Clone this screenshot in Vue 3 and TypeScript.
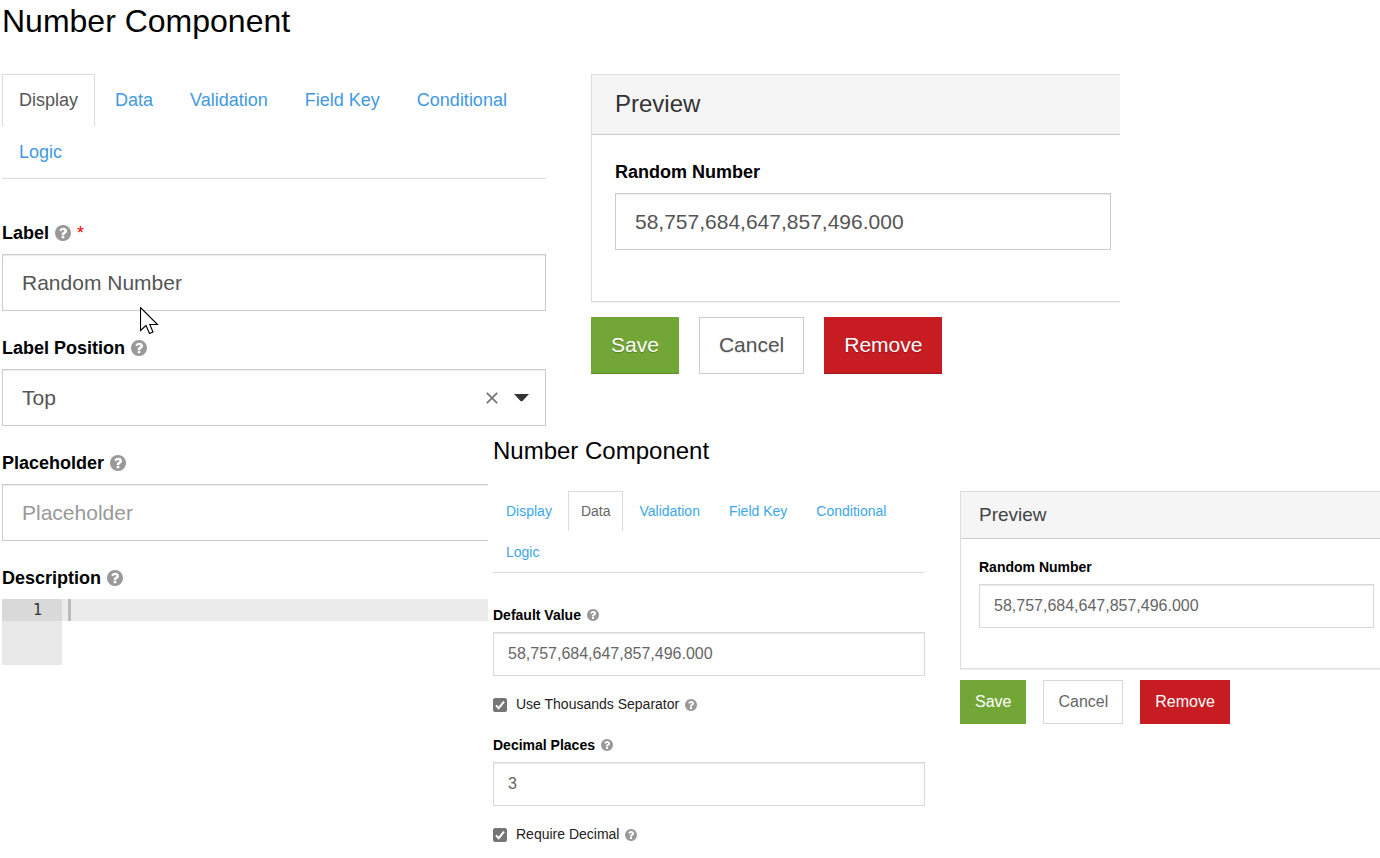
<script setup lang="ts">
import { ref } from 'vue'

interface TextField {
  kind: 'text'
  id: string
  label: string
  value: string
  placeholder?: string
  required?: boolean
}
interface SelectField {
  kind: 'select'
  id: string
  label: string
  value: string
  options: string[]
}
interface CodeField {
  kind: 'code'
  id: string
  label: string
  value: string
}
interface CheckField {
  kind: 'check'
  id: string
  label: string
  checked: boolean
}
type Field = TextField | SelectField | CodeField | CheckField

interface Panel {
  id: string
  compact: boolean
  activeTab: string
  fields: Field[]
  preview: string
}

const tabs = ['Display', 'Data', 'Validation', 'Field Key', 'Conditional', 'Logic']

const helpPath =
  'M1024 1376v-192q0-14-9-23t-23-9h-192q-14 0-23 9t-9 23v192q0 14 9 23t23 9h192q14 0 23-9t9-23zM1280 704q0-88-55.5-163t-138.5-116-170-41q-243 0-371 213-15 24 8 42l132 100q7 6 19 6 16 0 25-12 53-68 86-92 34-24 86-24 48 0 85.5 26t37.5 59q0 38-20 61t-68 45q-63 28-115.5 86.5t-52.5 125.5v36q0 14 9 23t23 9h192q14 0 23-9t9-23q0-19 21.5-49.5t54.5-49.5q32-18 49-28.5t46-35 44.5-48 28-60.5 12.5-81zM1664 896q0 209-103 385.5t-279.5 279.5-385.5 103-385.5-103-279.5-279.5-103-385.5 103-385.5 279.5-279.5 385.5-103 385.5 103 279.5 279.5 103 385.5z'

const panels = ref<Panel[]>([
  {
    id: 'display',
    compact: false,
    activeTab: 'Display',
    preview: '58,757,684,647,857,496.000',
    fields: [
      { kind: 'text', id: 'label', label: 'Label', value: 'Random Number', required: true },
      { kind: 'select', id: 'label-position', label: 'Label Position', value: 'Top', options: ['Top', 'Left', 'Right', 'Bottom'] },
      { kind: 'text', id: 'placeholder', label: 'Placeholder', value: '', placeholder: 'Placeholder' },
      { kind: 'code', id: 'description', label: 'Description', value: '' },
    ],
  },
  {
    id: 'data',
    compact: true,
    activeTab: 'Data',
    preview: '58,757,684,647,857,496.000',
    fields: [
      { kind: 'text', id: 'default-value', label: 'Default Value', value: '58,757,684,647,857,496.000' },
      { kind: 'check', id: 'thousands', label: 'Use Thousands Separator', checked: true },
      { kind: 'text', id: 'decimal-places', label: 'Decimal Places', value: '3' },
      { kind: 'check', id: 'require-decimal', label: 'Require Decimal', checked: true },
    ],
  },
])
</script>

<template>
  <main class="page">
    <section v-for="panel in panels" :key="panel.id" class="panel" :class="{ compact: panel.compact }">
      <h1 class="title">Number Component</h1>

      <div class="columns">
        <div class="settings">
          <nav class="tabs">
            <a
              v-for="tab in tabs"
              :key="tab"
              href="#"
              class="tab"
              :class="{ active: tab === panel.activeTab }"
              @click.prevent="panel.activeTab = tab"
            >{{ tab }}</a>
          </nav>

          <div class="fields">
            <div v-for="field in panel.fields" :key="field.id" class="field">
              <template v-if="field.kind === 'check'">
                <div class="check-row">
                  <span class="check-box">
                    <input :id="field.id" v-model="field.checked" type="checkbox" />
                    <svg v-if="field.checked" viewBox="0 0 14 14" aria-hidden="true">
                      <path d="M3 7.4 5.7 10.2 11 3.6" fill="none" stroke="#fff" stroke-width="2" />
                    </svg>
                  </span>
                  <label :for="field.id">{{ field.label }}</label>
                  <svg class="help" viewBox="128 128 1536 1536" aria-hidden="true"><path :d="helpPath" /></svg>
                </div>
              </template>

              <template v-else>
                <div class="label-row">
                  <label :for="field.id">{{ field.label }}</label>
                  <svg class="help" viewBox="128 128 1536 1536" aria-hidden="true"><path :d="helpPath" /></svg>
                  <span v-if="field.kind === 'text' && field.required" class="required">*</span>
                </div>

                <input
                  v-if="field.kind === 'text'"
                  :id="field.id"
                  v-model="field.value"
                  class="control"
                  type="text"
                  :placeholder="field.placeholder"
                />

                <div v-else-if="field.kind === 'select'" class="select-wrap">
                  <select :id="field.id" v-model="field.value" class="control">
                    <option v-for="option in field.options" :key="option">{{ option }}</option>
                  </select>
                  <div class="select-icons">
                    <button type="button" class="clear" aria-label="Clear selection" @click="field.value = ''">
                      <svg viewBox="0 0 12 12" aria-hidden="true">
                        <path d="M.8.8 11.2 11.2M11.2.8.8 11.2" stroke="#777" stroke-width="1.8" />
                      </svg>
                    </button>
                    <svg class="arrow" viewBox="0 0 15 8" aria-hidden="true">
                      <path d="M0 0h15L8.500 6.900Q7.500 7.800 6.500 6.900Z" fill="#333" />
                    </svg>
                  </div>
                </div>

                <div v-else class="editor">
                  <div class="gutter"><span class="line-number">1</span></div>
                  <div class="code">
                    <textarea :id="field.id" v-model="field.value" rows="3" spellcheck="false"></textarea>
                    <span class="caret"></span>
                  </div>
                </div>
              </template>
            </div>
          </div>
        </div>

        <div class="side">
          <div class="card">
            <h2 class="card-title">Preview</h2>
            <div class="card-body">
              <div class="label-row">
                <label :for="`${panel.id}-preview`">Random Number</label>
              </div>
              <input :id="`${panel.id}-preview`" v-model="panel.preview" class="control" type="text" />
            </div>
          </div>
          <div class="actions">
            <button type="button" class="btn save">Save</button>
            <button type="button" class="btn cancel">Cancel</button>
            <button type="button" class="btn remove">Remove</button>
          </div>
        </div>
      </div>
    </section>

    <svg class="pointer" viewBox="0 0 19 28" aria-hidden="true">
      <path
        d="M.5.500V23.500L6 18.500 9.500 26.500 13 25 9.800 17.500H17.500Z"
        fill="#fff"
        stroke="#000"
        stroke-width="1.100"
      />
    </svg>
  </main>
</template>

<style>
body {
  margin: 0;
  background: #fff;
}
</style>

<style scoped>
.page {
  position: relative;
  min-height: 100vh;
  overflow: hidden;
  font-family: "Liberation Sans", Arial, sans-serif;
  color: #000;
}

.page *,
.page *::before {
  box-sizing: border-box;
}

.panel {
  --title-size: 32px;
  --title-line: 42px;
  --title-gap: 32px;
  --text: 18px;
  --line: 24px;
  --control-text: 21px;
  --control-height: 57px;
  --control-pad: 19px;
  --label-gap: 9px;
  --field-gap: 25px;
  --help-size: 16px;
  --tab-pad: 13px 16px 14px;
  --tab-row-gap: 0;
  --tabs-gap: 42px;
  --card-title-size: 24px;
  --card-title-height: 60px;
  --card-title-pad: 0 23px 2px;
  --card-pad: 25px 9px 51px 23px;
  --card-gap: 15px;
  --button-pad: 0 19px 2px;
  --button-gap: 20px;
  --link: #4299e1;
  --control-border: #ccc;
  --muted: #555;
  padding: 0 260px 0 2px;
}

.columns {
  display: grid;
  grid-template-columns: minmax(0, 544fr) minmax(0, 529fr);
  column-gap: 45px;
  align-items: start;
}

/* The second panel floats over the lower right part of the first one. */
.compact {
  --title-size: 24px;
  --title-line: 33px;
  --title-gap: 24px;
  --text: 14px;
  --line: 20px;
  --control-text: 16px;
  --control-height: 44px;
  --control-pad: 14px;
  --label-gap: 7px;
  --field-gap: 19px;
  --help-size: 12px;
  --tab-pad: 9px 12px 10px;
  --tab-row-gap: 1px;
  --tabs-gap: 32px;
  --card-title-size: 19px;
  --card-title-height: 47px;
  --card-title-pad: 0 18px;
  --card-pad: 18px 6px 40px 18px;
  --card-gap: 11px;
  --button-pad: 0 14px;
  --button-gap: 17px;
  --link: #3ba7ea;
  --control-border: #d8d8d8;
  --muted: #666;
  position: absolute;
  top: 427px;
  right: 0;
  bottom: 0;
  left: 488px;
  padding: 7px 0 0 5px;
  background: #fff;
}

.compact .columns {
  grid-template-columns: minmax(0, 432fr) minmax(0, 420fr);
  column-gap: 35px;
}

.title {
  margin: 0 0 var(--title-gap);
  font-size: var(--title-size);
  line-height: var(--title-line);
  font-weight: 400;
}

.tabs {
  display: flex;
  flex-wrap: wrap;
  gap: var(--tab-row-gap) 3px;
  margin-bottom: var(--tabs-gap);
  border-bottom: 1px solid #ddd;
}

.tab {
  padding: var(--tab-pad);
  border: 1px solid transparent;
  border-bottom: 0;
  font-size: var(--text);
  line-height: var(--line);
  color: var(--link);
  text-decoration: none;
}

.tab.active {
  border-color: #ddd;
  color: var(--muted);
}

.fields {
  display: flex;
  flex-direction: column;
  gap: var(--field-gap);
}

.label-row {
  display: flex;
  align-items: center;
  margin-bottom: var(--label-gap);
  font-size: var(--text);
  line-height: var(--line);
  font-weight: 700;
}

.help {
  width: var(--help-size);
  height: var(--help-size);
  margin-left: 6px;
  fill: #999;
}

.required {
  margin-left: 6px;
  color: #f00;
  font-weight: 400;
}

.control {
  display: block;
  width: 100%;
  height: var(--control-height);
  margin: 0;
  padding: 0 var(--control-pad);
  border: 1px solid var(--control-border);
  border-radius: 0;
  background: #fff;
  box-shadow: inset 0 1px 1px rgba(0, 0, 0, 0.08);
  font-family: inherit;
  font-size: var(--control-text);
  color: var(--muted);
  appearance: none;
  outline: none;
}

.control::placeholder {
  color: #999;
  opacity: 1;
}

.select-wrap {
  position: relative;
}

.select-icons {
  position: absolute;
  top: 0;
  right: 17px;
  bottom: 0;
  display: flex;
  align-items: center;
  gap: 16px;
  pointer-events: none;
}

.clear {
  display: flex;
  padding: 0;
  border: 0;
  background: none;
  pointer-events: auto;
}

.clear svg {
  width: 12px;
  height: 12px;
}

.arrow {
  width: 15px;
  height: 8px;
}

.editor {
  display: flex;
  font-family: "DejaVu Sans Mono", monospace;
  font-size: 15px;
  line-height: 22px;
}

.gutter {
  width: 60px;
  background: #e8e8e8;
  color: #333;
}

.line-number {
  display: block;
  padding-right: 20px;
  background: #d9d9d9;
  text-align: right;
}

.code {
  position: relative;
  flex: 1;
}

.code textarea {
  display: block;
  width: 100%;
  height: 66px;
  padding: 0 6px;
  border: 0;
  outline: none;
  resize: none;
  background: linear-gradient(#ececec, #ececec) 0 0 / 100% 22px no-repeat;
  font: inherit;
  color: #333;
}

.caret {
  position: absolute;
  top: 0;
  left: 6px;
  width: 3px;
  height: 22px;
  background: #bbb;
}

.check-row {
  display: flex;
  align-items: center;
  padding-bottom: 2px;
  font-size: var(--text);
  line-height: 19px;
  color: #222;
}

.check-box {
  display: grid;
  margin-right: 9px;
}

.check-box > * {
  grid-area: 1 / 1;
  width: 14px;
  height: 14px;
}

.check-box input {
  margin: 0;
  border: 1px solid #767676;
  border-radius: 2px;
  appearance: none;
}

.check-box input:checked {
  background: #767676;
}

.check-box svg {
  pointer-events: none;
}

.card {
  border: 1px solid #ddd;
  border-right: 0;
  box-shadow: 0 1px 1px rgba(0, 0, 0, 0.05);
}

.card-title {
  display: flex;
  align-items: center;
  height: var(--card-title-height);
  margin: 0;
  padding: var(--card-title-pad);
  border-bottom: 1px solid #ccc;
  background: #f5f5f5;
  font-size: var(--card-title-size);
  font-weight: 400;
  color: #333;
}

.compact .card-title {
  color: #444;
}

.card-body {
  padding: var(--card-pad);
}

.actions {
  display: flex;
  gap: var(--button-gap);
  margin-top: var(--card-gap);
}

.btn {
  height: var(--control-height);
  padding: var(--button-pad);
  border: 1px solid transparent;
  border-radius: 0;
  font-family: inherit;
  font-size: var(--control-text);
  color: #fff;
  text-shadow: 0 1px 1px rgba(0, 0, 0, 0.25);
}

.save {
  border-color: #72a738;
  border-bottom-color: #5c8a2b;
  background: #72a738;
}

.cancel {
  border-color: var(--control-border);
  background: #fff;
  color: var(--muted);
  text-shadow: 0 1px 1px rgba(0, 0, 0, 0.12);
}

.remove {
  border-color: #c71c22;
  border-bottom-color: #9e151a;
  background: #c71c22;
}

.compact .btn {
  border-bottom-color: transparent;
  text-shadow: none;
}

.compact .cancel {
  border-bottom-color: var(--control-border);
}

.pointer {
  position: absolute;
  top: 307px;
  left: 140px;
  width: 19px;
  height: 28px;
  pointer-events: none;
}
</style>
